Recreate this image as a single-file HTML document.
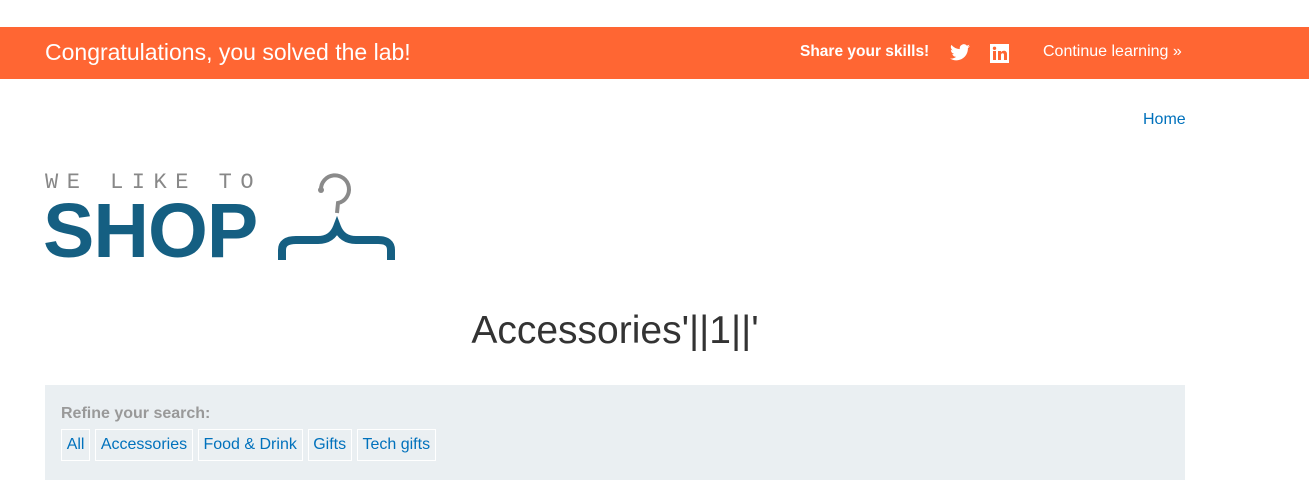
<!DOCTYPE html>
<html><head><style>
body{margin:0;background:#fff;font-family:"Liberation Sans",Arial,sans-serif;width:1309px;height:498px;overflow:hidden;position:relative}
.bar{position:absolute;top:27px;left:0;width:1309px;height:52px;background:#ff6633;color:#fff}
.bar .t{position:absolute;left:45px;top:12px;font-size:23px}
.bar .s{position:absolute;left:800px;top:16px;font-size:15.5px;font-weight:bold}
.bar .c{position:absolute;left:1043px;top:16px;font-size:16px}
.home{position:absolute;left:1143px;top:111px;font-size:16px;color:#0071bc}
.we{position:absolute;left:45px;top:170px;font-family:"Liberation Mono",monospace;font-size:22px;color:#888;letter-spacing:8.5px}
.shop{position:absolute;left:43px;top:187px;font-size:77px;font-weight:bold;color:#155f82;letter-spacing:-1px}
h1{position:absolute;left:0;width:1230px;text-align:center;top:309px;margin:0;font-weight:normal;font-size:39px;color:#333}
.box{position:absolute;left:45px;top:385px;width:1140px;height:95px;background:#eaeff2}
.r{position:absolute;left:16px;top:20px;font-size:16px;font-weight:bold;color:#999}
.btns{position:absolute;left:16px;top:44px;display:flex;gap:5px}
.btns span{border:1px solid #fff;padding:6px 4.7px;font-size:16px;color:#0071bc;line-height:18px}
</style></head><body>
<div class="bar"><div class="t">Congratulations, you solved the lab!</div>
<div class="s">Share your skills!</div>
<svg style="position:absolute;left:950px;top:17px" width="20" height="17" viewBox="0 0 24 20"><path fill="#fff" d="M24 2.4a9.8 9.8 0 0 1-2.8.8A4.9 4.9 0 0 0 23.3.5a9.9 9.9 0 0 1-3.1 1.2A4.9 4.9 0 0 0 11.8 6 14 14 0 0 1 1.7.9a4.9 4.9 0 0 0 1.5 6.6A4.9 4.9 0 0 1 1 6.9a4.9 4.9 0 0 0 3.9 4.8 4.9 4.9 0 0 1-2.2.1 4.9 4.9 0 0 0 4.6 3.4A9.9 9.9 0 0 1 0 17.2 14 14 0 0 0 7.5 19.4c9.1 0 14-7.5 14-14v-.6A10 10 0 0 0 24 2.4z"/></svg>
<svg style="position:absolute;left:990px;top:17px" width="19" height="19" viewBox="0 0 19 19"><rect width="19" height="19" fill="#fff"/><rect x="3" y="7" width="3" height="9" fill="#ff6633"/><circle cx="4.5" cy="4.3" r="1.7" fill="#ff6633"/><path d="M8 7h3v1.3c.6-1 1.7-1.5 3-1.5 2 0 3 1.3 3 3.6V16h-3v-5c0-1.2-.4-1.8-1.4-1.8S11 9.9 11 11v5H8z" fill="#ff6633"/></svg>
<div class="c">Continue learning &#187;</div></div>
<div class="home">Home</div>
<div class="we">WE LIKE TO</div>
<div class="shop">SHOP</div>
<svg style="position:absolute;left:276px;top:172px" width="122" height="90" viewBox="0 0 122 90">
<path d="M45 18 A14 14 0 1 1 62 31 L61 41" fill="none" stroke="#8a8a8a" stroke-width="4"/>
<circle cx="45" cy="18" r="3" fill="#8a8a8a"/>
<path d="M6 88 V78 Q6 68 20 68 H42 Q56 68 61 55 Q66 68 80 68 H102 Q115 68 115 78 V88" fill="none" stroke="#155f82" stroke-width="8"/>
</svg>
<h1>Accessories'||1||'</h1>
<div class="box"><div class="r">Refine your search:</div>
<div class="btns"><span>All</span><span>Accessories</span><span>Food &amp; Drink</span><span>Gifts</span><span>Tech gifts</span></div></div>
</body></html>
